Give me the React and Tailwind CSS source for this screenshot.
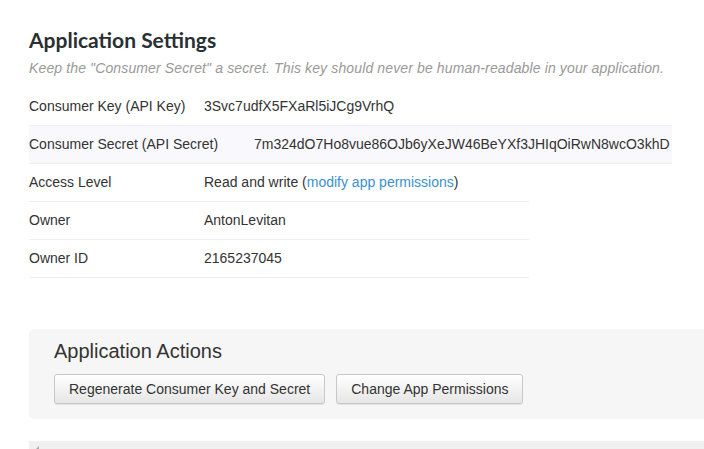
export default function App() {
    const font = { fontFamily: '"Liberation Sans", Arial, sans-serif' }

    return (
        <div className="w-[704px] h-[449px] overflow-hidden bg-white text-[#333]" style={font}>
            <div className="pl-[29px]">
                <h2 className="pt-[27px] text-[21px] leading-[26px] font-bold text-[#292f33]" style={{ fontFamily: 'Lato, "Open Sans", sans-serif' }}>
                    Application Settings
                </h2>
                <p className="mt-[6px] text-[14px] leading-[18px] italic text-[#999] tracking-[0.13px]">
                    Keep the "Consumer Secret" a secret. This key should never be human-readable in your application.
                </p>

                <div className="mt-[11px] text-[14px]">
                    <div className="w-[643px] h-[38px] flex items-center border-b border-[#eeeeee] whitespace-nowrap overflow-hidden">
                        <span className="w-[175px] shrink-0">Consumer Key (API Key)</span>
                        <span>3Svc7udfX5FXaRl5iJCg9VrhQ</span>
                    </div>
                    <div className="w-[643px] h-[38px] flex items-center border-b border-[#eeeeee] bg-[#f9f9fd] whitespace-nowrap overflow-hidden">
                        <span className="w-[225px] shrink-0">Consumer Secret (API Secret)</span>
                        <span>7m324dO7Ho8vue86OJb6yXeJW46BeYXf3JHIqOiRwN8wcO3khD</span>
                    </div>
                    <div className="w-[500px] h-[38px] flex items-center border-b border-[#eeeeee]">
                        <span className="w-[175px] shrink-0">Access Level</span>
                        <span>
                            Read and write (<a href="#" className="text-[#3b8fd0]">modify app permissions</a>)
                        </span>
                    </div>
                    <div className="w-[500px] h-[38px] flex items-center border-b border-[#eeeeee]">
                        <span className="w-[175px] shrink-0">Owner</span>
                        <span>AntonLevitan</span>
                    </div>
                    <div className="w-[500px] h-[38px] flex items-center border-b border-[#eeeeee]">
                        <span className="w-[175px] shrink-0">Owner ID</span>
                        <span>2165237045</span>
                    </div>
                </div>

                <div className="mt-[51px] w-[720px] h-[90px] bg-[#f6f6f6] rounded-tl-[5px] rounded-bl-[5px] pl-[25px] pt-[10px]">
                    <h3 className="text-[20px] leading-[24px] text-[#333]">Application Actions</h3>
                    <div className="mt-[11px] flex gap-[11px]">
                        <button className="h-[30px] px-[14px] text-[14px] text-[#333] border border-[#c8c8c8] rounded-[3px] bg-gradient-to-b from-white to-[#e6e6e6] shadow-[0_1px_0_rgba(0,0,0,0.08)]">
                            Regenerate Consumer Key and Secret
                        </button>
                        <button className="h-[30px] px-[14px] text-[14px] text-[#333] border border-[#c8c8c8] rounded-[3px] bg-gradient-to-b from-white to-[#e6e6e6] shadow-[0_1px_0_rgba(0,0,0,0.08)]">
                            Change App Permissions
                        </button>
                    </div>
                </div>

                <div className="mt-[22px] w-[720px] h-[20px] bg-[#f0f0f0] relative">
                    <div className="absolute left-[6px] top-[5px] w-0 h-0 border-l-[4px] border-l-transparent border-b-[4px] border-b-[#aaa]"></div>
                </div>
            </div>
        </div>
    )
}
